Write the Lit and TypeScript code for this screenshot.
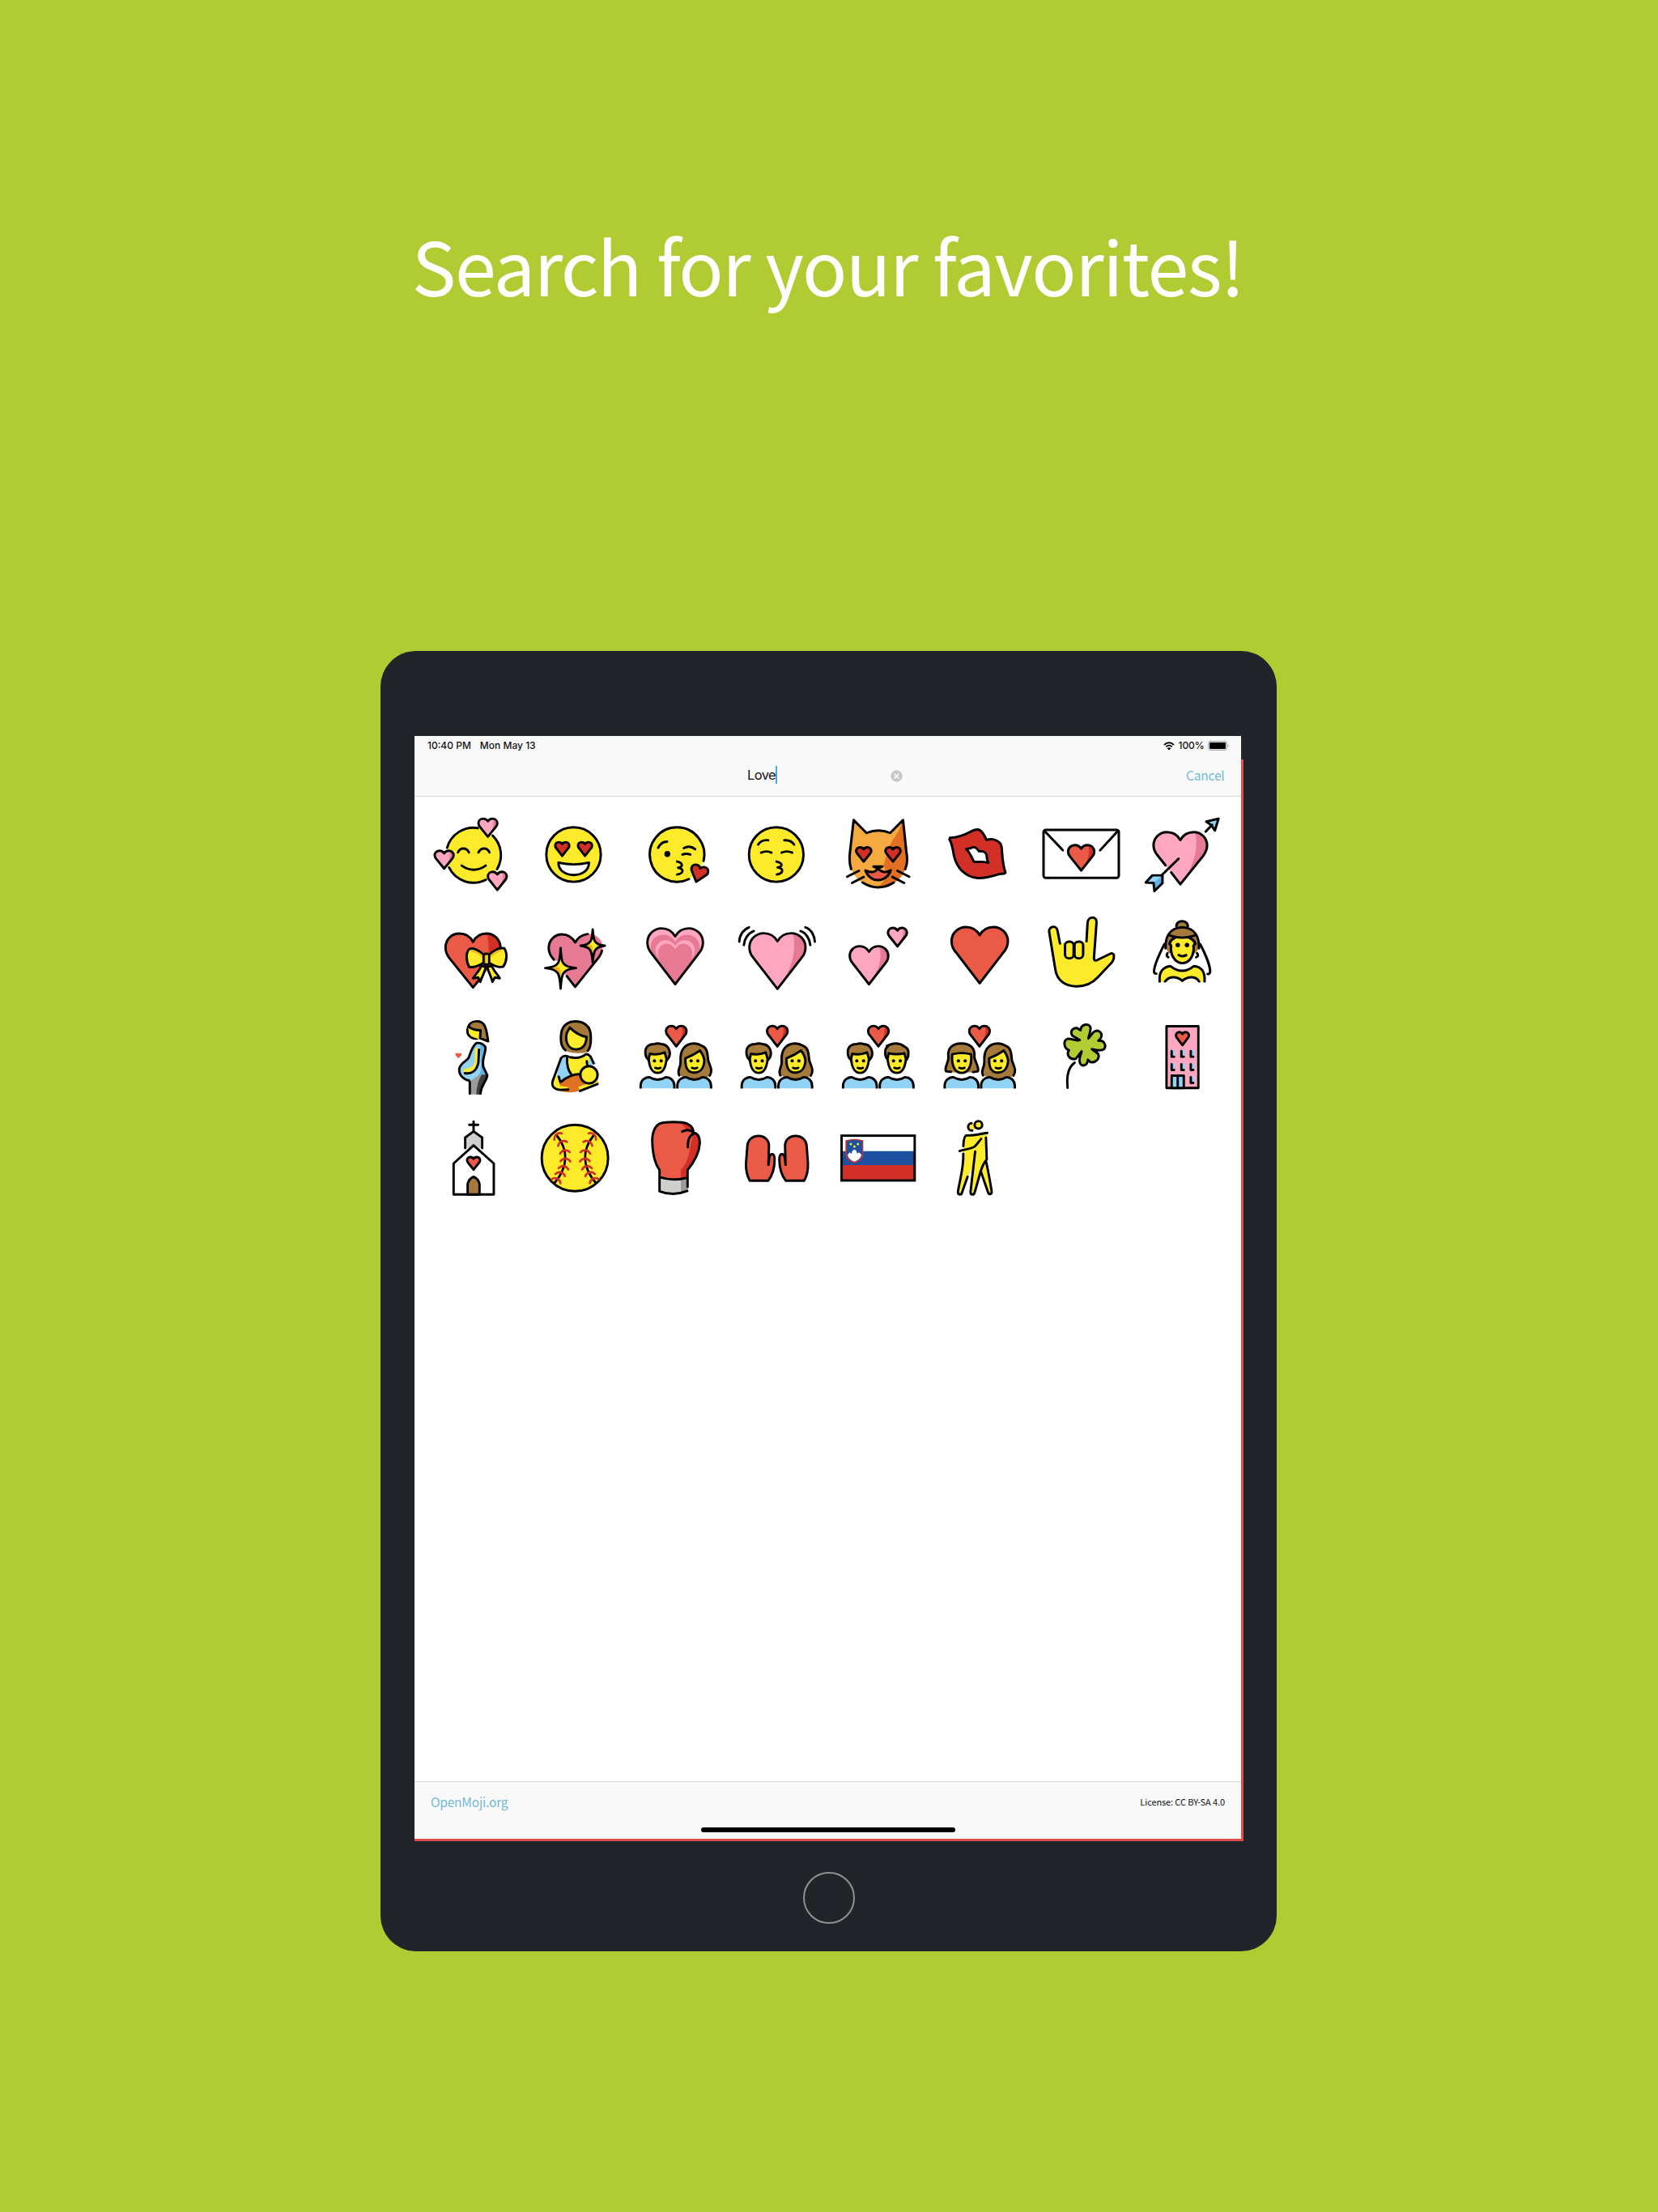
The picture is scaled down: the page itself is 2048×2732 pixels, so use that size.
import { LitElement, html, svg, css, type TemplateResult } from "lit";
import { customElement } from "lit/decorators.js";

type Art = TemplateResult;

const C = {
  yellow: "#fcea2b",
  gold: "#f1b31c",
  pink: "#ffa7c0",
  rose: "#e67a94",
  red: "#ea5a47",
  crimson: "#d22f27",
  sky: "#92d3f5",
  azure: "#61b2e4",
  brown: "#a57939",
  grey: "#d0cfce",
  midGrey: "#9b9b9a",
  coal: "#3f3f3f",
  orange: "#f4aa41",
  rust: "#e27022",
  green: "#b1cc33",
};

/* Filled and outlined path. */
const p = (d: string, fill = "none") => svg`<path class="ln" d=${d} fill=${fill}/>`;
/* Filled path without outline. */
const f = (d: string, fill: string) => svg`<path d=${d} fill=${fill}/>`;
const dot = (x: number, y: number, r: number, fill = "#000") => svg`<circle cx=${x} cy=${y} r=${r} fill=${fill}/>`;
const ring = (x: number, y: number, r: number, fill = "none") =>
  svg`<circle class="ln" cx=${x} cy=${y} r=${r} fill=${fill}/>`;

/* Heart outline from centre x, half width, top and tip. */
function scaled(d: string, cx: number, hw: number, top: number, tip: number): string {
  const sy = (tip - top) / 2.01;
  let i = 0;
  return d.replace(/-?\d*\.?\d+/g, (n) => {
    const v = i++ % 2 === 0 ? cx + Number(n) * hw : top + Number(n) * sy;
    return v.toFixed(1);
  });
}
const HEART =
  "M0 .29C-.1 .11 -.28 0 -.49 0C-.78 0 -1 .23 -1 .51C-1 .66 -.94 .8 -.85 .9L0 2.01L.85 .9C.94 .8 1 .66 1 .51C1 .23 .78 0 .49 0C.28 0 .1 .11 0 .29Z";
const HEART_SIDE = "M.55 0C.68 .6 .55 1.3 0 2.01L.85 .9C.94 .8 1 .66 1 .51C1 .23 .8 0 .55 0Z";
const heart = (cx: number, hw: number, top: number, tip: number, fill: string, side = "") => svg`
  ${f(scaled(HEART, cx, hw, top, tip), fill)}
  ${side ? f(scaled(HEART_SIDE, cx, hw, top, tip), side) : ""}
  ${p(scaled(HEART, cx, hw, top, tip))}`;
const flatHeart = (cx: number, hw: number, top: number, tip: number, fill: string) =>
  f(scaled(HEART, cx, hw, top, tip), fill);

/* People used in the couples. Positions are relative to the face centre. */
const shoulders = p("M-63 74V62C-62 40 -43 31 -30 32Q0 50 30 32C46 31 62 44 62 64V74", C.sky);
const shouldersBox = svg`${shoulders}<rect x="-70" y="74" width="140" height="8" fill="#fff"/>`;
const features = svg`${dot(-12, -29, 6)}${dot(13, -29, 6)}<path class="ln thin" d="M-9 -3Q1 2 11 -3"/>`;
const man = (x: number) => svg`<g transform="translate(${x} 240)">
  ${f("M-43 -44C-49 -70 -42 -90 -12 -91Q0 -95 13 -91C42 -90 49 -60 42 -42L33 -32L30 -58Q0 -46 -32 -58L-33 -34Z", C.brown)}
  ${f("M-32 -56Q0 -46 30 -58C36 -22 24 16 0 16C-26 14 -36 -20 -32 -56Z", C.yellow)}
  ${p("M-34 -32L-42 -42C-51 -68 -44 -91 -12 -91Q0 -95 13 -91C42 -90 50 -60 42 -42L35 -32")}
  ${p("M-33 -36L-29 -55Q0 -49 26 -60L33 -36C30 -6 20 16 0 16C-20 16 -31 -6 -33 -36")}
  ${features}${shouldersBox}</g>`;
const manParted = (x: number) => svg`<g transform="translate(${x} 240)">
  ${f("M-40 -42C-46 -60 -42 -78 -36 -81L-38 -86Q-16 -94 -2 -93C20 -93 36 -82 42 -70C48 -55 42 -40 37 -32L30 -56Q0 -50 -32 -56L-34 -33Z", C.brown)}
  ${f("M-32 -56Q0 -48 31 -56C36 -22 24 16 0 16C-26 14 -36 -20 -32 -56Z", C.yellow)}
  ${p("M-34 -33L-40 -42C-46 -60 -42 -78 -34 -80L-37 -84Q-14 -94 -2 -93C14 -92 22 -87 30 -81C46 -75 47 -50 37 -33")}
  ${p("M-34 -36L-30 -57Q0 -50 28 -57L34 -36C31 -6 20 16 0 16C-20 16 -31 -6 -34 -36")}
  ${features}${shouldersBox}</g>`;
const woman = (x: number) => svg`<g transform="translate(${x} 240)">
  ${f("M-57 24C-66 5 -50 -5 -52 -25C-54 -66 -38 -93 0 -93C17 -93 23 -87 33 -83C52 -72 50 -45 54 -28C62 -5 68 10 56 26Q44 36 36 32Q0 46 -36 32Z", C.brown)}
  ${f("M-33 -37Q-3 -50 21 -68C29 -55 37 -45 37 -28C35 0 20 15 0 15C-22 15 -35 0 -33 -37Z", C.yellow)}
  ${p("M-56 25C-66 5 -50 -2 -51 -25C-54 -66 -38 -93 0 -93C14 -93 22 -88 31 -83C52 -74 48 -45 52 -28C62 -2 68 10 57 26")}
  ${p("M-33 -38Q-3 -50 21 -67C29 -55 37 -45 37 -28C35 0 20 15 0 15C-22 15 -35 0 -33 -38Z")}
  ${features}${shouldersBox}</g>`;
const womanBob = (x: number) => svg`<g transform="translate(${x} 240)">
  ${f("M-36 14L-58 10C-68 -5 -48 -20 -50 -42C-54 -76 -34 -93 -2 -93C34 -93 51 -74 47 -42C50 -24 66 -5 60 10L38 14Z", C.brown)}
  ${f("M-35 -52Q0 -62 35 -52C39 -10 24 16 0 16C-24 16 -39 -10 -35 -52Z", C.yellow)}
  ${p("M-40 12L-58 10C-66 -5 -48 -20 -49 -42C-54 -76 -34 -93 -2 -93C34 -93 51 -74 47 -42C50 -24 66 -5 60 10L42 13")}
  ${p("M-35 -53Q0 -62 35 -53C39 -10 24 16 0 16C-24 16 -39 -10 -35 -53Z")}
  ${features}${shouldersBox}</g>`;

const couple = (x: number, a: Art, b: Art) => svg`${heart(x, 38, 82, 158, C.red, C.crimson)}${a}${b}`;

const sparkle = (x: number, y: number, rx: number, up: number, down: number) => {
  const d = `M${x} ${y - up}C${x + 2} ${y - 20} ${x + 5} ${y - 4} ${x + rx} ${y}C${x + 7} ${y + 4} ${x + 3} ${y + 20} ${x} ${y + down}C${x - 3} ${y + 20} ${x - 7} ${y + 4} ${x - rx} ${y}C${x - 5} ${y - 4} ${x - 2} ${y - 20} ${x} ${y - up}Z`;
  const shade = `M${x - rx} ${y}L${x - 7} ${y - 3}Q${x} ${y + 4} ${x + 1} ${y + 20}L${x} ${y + down}C${x - 3} ${y + 20} ${x - 7} ${y + 4} ${x - rx} ${y}Z`;
  return svg`${f(`M${x - 11} ${y - 28}L${x} ${y - 34}V${y}H${x - 8}Z`, C.yellow)}${f(d, C.yellow)}${f(shade, C.gold)}${p(d)}`;
};

const stitches: Array<[number, number, number]> = [
  [533, 112, -34], [551, 138, -18], [562, 171, -2], [565, 202, 8], [558, 230, 14], [547, 253, 20], [533, 276, 32],
];
const seam = svg`
  ${p("M532 112C576 166 576 228 524 290")}
  ${stitches.map(([x, y, a]) => svg`<path class="ln stitch" transform="translate(${x} ${y}) rotate(${a})" d="M-17 9Q-8 -4 0 -3Q12 -4 19 5"/>`)}`;

const mitten = svg`
  ${f("M1249 281C1238 265 1234 240 1235 215L1240 150C1245 103 1318 103 1319 150V190Q1340 165 1341 200C1341 235 1332 262 1318 281Z", C.red)}
  ${p("M1318 222L1321 195C1325 176 1341 178 1341 202C1341 235 1332 262 1317 281H1249C1238 262 1234 240 1235 215L1240 150C1245 103 1318 103 1320 150L1318 222")}`;

const hotelWindow = (x: number, y: number) => svg`
  <rect x=${x} y=${y - 2} width="13" height="26" fill=${C.sky}/>${p(`M${x} ${y + 2}V${y + 23}H${x + 9}`)}`;

/* Each drawing lives on one sheet: origin x, origin y, horizontal units per px. Vertical is 3 per px. */
type Sheet = [number, number, number];
const A: Sheet = [500, 990, 3];
const B: Sheet = [1010, 990, 2.9037];
const D: Sheet = [510, 1240, 3];
const E: Sheet = [1020, 1240, 3];
const F: Sheet = [510, 1365, 3];
const G: Sheet = [1020, 1365, 3];

interface Emoji { name: string; sheet: Sheet; art: Art; }

const EMOJIS: Emoji[] = [
  { name: "smiling face with hearts", sheet: A, art: svg`
    ${dot(255, 198, 101, C.yellow)}
    ${p("M270 98A101 101 0 0 0 156 171M163 244A101 101 0 0 0 300 289M325 126A101 101 0 0 1 341 250")}
    ${heart(307, 35, 63, 130, C.pink, C.rose)}${heart(145, 35, 182, 248, C.pink, C.rose)}${heart(342, 35, 260, 327, C.pink, C.rose)}
    ${p("M196 188C204 169 228 169 237 188M272 188C281 169 305 169 313 188M210 237Q254 268 299 237")}` },
  { name: "smiling face with heart-eyes", sheet: A, art: svg`
    ${ring(625, 196, 101, C.yellow)}
    ${heart(583, 26, 150, 201, C.crimson)}${heart(667.5, 26, 150, 201, C.crimson)}
    ${p("M569 226Q626 239 682 226C682 287 569 287 569 226Z", "#fff")}` },
  { name: "face blowing a kiss", sheet: A, art: svg`
    ${dot(1008, 196, 101, C.yellow)}
    ${p("M1107 220A101 101 0 1 0 1053 287")}
    ${p("M939 171Q950 148 972 148M1034 172Q1056 160 1076 176M1029 196Q1043 190 1058 196M1009 222C1032 227 1032 241 1013 245C1036 248 1034 267 1009 270")}
    ${dot(973, 194, 11)}
    <g transform="rotate(17 1080 297)">${heart(1080, 32, 236, 297, C.crimson)}</g>` },
  { name: "kissing face with closed eyes", sheet: A, art: svg`
    ${ring(1377, 196, 101, C.yellow)}
    ${p("M1310 159Q1322 140 1347 143M1407 143Q1432 141 1443 159M1321 189Q1341 180 1359 189M1397 189Q1417 180 1436 189M1378 222C1402 228 1402 240 1382 244C1406 248 1404 266 1379 270")}` },
  { name: "smiling cat with heart-eyes", sheet: B, art: svg`
    ${f("M130 68L176 116Q219 98 261 116L307 68L319 185C330 260 290 316 218 316C146 316 108 260 117 185Z", C.orange)}
    ${f("M307 68L319 185C330 260 290 316 218 316C244 292 252 272 250 262L236 238C250 200 254 160 278 130C290 112 300 92 307 68Z", C.rust)}
    ${p("M121 250C112 225 115 205 117 185L130 68L176 116Q219 98 261 116L307 68L319 185C322 205 325 225 315 250M162 300Q218 336 274 300")}
    ${heart(166, 27, 169, 222, C.crimson)}${heart(271, 27, 169, 222, C.crimson)}
    ${p("M172 255Q202 270 217 248Q238 270 263 254C248 303 188 303 172 255Z", C.red)}
    ${p("M201 240H233L217 248Z", "#000")}
    ${p("M107 278L149 256M124 301L166 279M329 278L287 256M311 301L269 279")}` },
  { name: "kiss mark", sheet: B, art: svg`
    ${p("M476 134Q512 132 548 112C582 92 592 108 607 142C632 134 658 146 661 168C664 200 664 235 675 262C673 270 663 266 655 268C630 276 600 286 575 283C530 280 500 245 490 200C486 170 480 150 474 139Z", C.crimson)}
    ${p("M534 176Q548 174 558 169C568 167 575 176 580 184C592 182 604 186 607 197Q608 215 613 227C598 219 580 225 562 223C554 208 548 188 534 176Z", "#fff")}` },
  { name: "love letter", sheet: B, art: svg`
    <rect class="ln" x="809" y="104.500" width="270" height="178" rx="8" fill="#fff"/>
    ${p("M813 109L878 180M1075 109L1012 180")}${heart(944, 47, 161, 255, C.red, C.crimson)}` },
  { name: "heart with arrow", sheet: B, art: svg`
    ${flatHeart(1300, 96, 113, 306, C.pink)}${f(scaled(HEART_SIDE, 1300, 96, 113, 306), C.rose)}
    ${p("M1247 236L1219 200C1208 187 1204 175 1204 162C1204 135 1225 113 1252 113C1273 113 1290 124 1300 142C1310 124 1327 113 1348 113C1375 113 1396 135 1396 162C1396 178 1390 190 1382 201L1300 306L1267 262")}
    ${p("M1294 211L1233 273")}
    ${f("M1176 300L1200 273L1236 273L1236 302L1207 331L1204 301Z", C.sky)}${f("M1236 273L1204 301L1207 331L1236 302Z", C.azure)}
    ${p("M1176 300L1200 273L1236 273L1236 302L1207 331L1204 301Z")}
    ${p("M1437 63L1393 74L1412 88L1424 107Z", C.sky)}${p("M1391 111L1414 86")}` },

  { name: "heart with ribbon", sheet: A, art: svg`
    ${flatHeart(252, 102, 489, 689, C.red)}
    ${f("M304 489C314 540 312 590 296 622L252 689L340 580C352 566 354 552 354 540C354 510 332 489 304 489Z", C.crimson)}
    ${p("M354 545C354 512 332 489 302 489C280 489 262 500 252 520C242 500 224 489 201 489C172 489 150 512 150 541C150 558 156 570 165 581L252 689L282 652")}
    ${p("M292 568C272 550 250 540 238 547C225 560 225 590 238 613C252 616 274 608 292 597Z", C.yellow)}
    ${p("M311 568C330 550 352 540 368 544C380 562 378 592 364 612C350 616 328 608 311 597Z", C.yellow)}
    <path d="M246 554Q268 556 287 574M356 551Q338 556 318 574" fill="none" stroke=${C.gold} stroke-width="6"/>
    ${p("M282 609C276 630 260 640 252 655L271 652L279 668C286 644 298 630 299 612Z", C.yellow)}
    ${p("M305 612C308 632 320 648 324 668L333 652L351 655C345 640 328 630 322 609Z", C.yellow)}
    <rect class="ln" x="291" y="564" width="20" height="40" rx="8" fill=${C.gold}/>
    ${f("M302 569H307V599H302Z", C.yellow)}` },
  { name: "sparkling heart", sheet: A, art: svg`
    ${flatHeart(631, 102, 490, 689, C.rose)}
    ${f("M552 590L590 590V640H560Z", "#fff")}
    ${p("M552 586C538 570 533 558 533 543C533 515 554 492 582 492C604 492 620 504 631 522C640 506 655 494 677 491M730 553C728 565 722 573 715 582L631 687L600 647")}
    ${sparkle(577, 617, 57, 74, 76)}${sparkle(696, 534, 45, 60, 62)}` },
  { name: "growing heart", sheet: A, art: svg`
    ${flatHeart(1002, 103, 470, 677, C.pink)}${flatHeart(1002, 91, 494, 677, C.rose)}
    ${flatHeart(1002, 73, 514, 662, C.pink)}${flatHeart(1002, 64, 527, 677, C.rose)}
    ${p(scaled(HEART, 1002, 103, 470, 677))}` },
  { name: "beating heart", sheet: A, art: svg`
    ${heart(1381.5, 104, 488, 694, C.pink, C.rose)}
    ${p("M1240 519C1241 495 1255 474 1276 466M1257 532C1258 510 1272 488 1294 480M1520 519C1519 497 1506 472 1485 466M1503 532C1502 511 1488 487 1467 480")}` },
  { name: "two hearts", sheet: B, art: svg`
    ${heart(185, 69, 536, 677, C.pink, C.rose)}${heart(287, 34, 468, 537, C.pink, C.rose)}` },
  { name: "red heart", sheet: B, art: heart(582.5, 101, 465, 673, C.red) },
  { name: "love-you gesture", sheet: B, art: svg`
    ${p("M868 526L859 478C856 458 828 460 829 482L851 620C856 665 890 686 930 685C965 684 985 672 1003 652L1054 596C1062 586 1062 576 1061 568C1059 562 1054 562 1048 564L1000 588C992 591 989 587 990 578L999 448C1001 424 969 424 967 448L963 518", C.yellow)}
    <rect class="ln" x="886" y="519" width="31" height="62" rx="14" fill=${C.yellow}/>
    <rect class="ln" x="920" y="519" width="31" height="62" rx="14" fill=${C.yellow}/>` },
  { name: "bride with veil", sheet: B, art: svg`
    ${p("M1286 463C1284 437 1328 437 1327 463", C.brown)}
    ${f("M1248 545C1244 515 1250 468 1307 466C1364 468 1370 515 1366 545L1354 562L1260 562Z", C.brown)}
    ${f("M1266 545C1262 520 1280 505 1307 503C1333 505 1352 520 1348 545C1348 580 1330 598 1307 599C1284 598 1266 575 1266 545Z", C.yellow)}
    ${p("M1247 544C1246 510 1256 468 1307 466C1358 468 1368 510 1367 544M1264 497Q1307 512 1350 497M1279 506Q1262 514 1261 528Q1270 532 1266 545C1268 580 1288 599 1307 599C1328 599 1346 580 1348 545Q1344 532 1354 528Q1352 514 1334 506")}
    ${p("M1243 528C1225 565 1205 610 1206 630Q1206 638 1214 638M1371 528C1390 565 1407 610 1407 630Q1406 640 1398 639M1254 562Q1248 572 1257 577M1360 562Q1368 572 1357 577")}
    ${dot(1291, 532, 8)}${dot(1324, 532, 8)}${p("M1294 569Q1307 577 1321 569")}
    ${p("M1226 668C1222 630 1240 612 1265 610Q1307 644 1348 610C1375 612 1390 630 1387 668", C.yellow)}
    ${p("M1245 668C1257 648 1285 645 1307 664C1330 645 1358 648 1368 668", "#fff")}
    ${f("M1215 671H1400V682H1215Z", "#fff")}` },

  { name: "pregnant woman", sheet: D, art: svg`
    ${p("M204 86C196 108 205 130 238 129", C.yellow)}${f("M204 86L248 96L246 134L238 129Q204 122 204 86Z", C.yellow)}
    ${p("M205 84C210 68 228 64 242 65C268 68 272 95 278 139L248 127L250 98Q222 98 205 84Z", C.brown)}
    ${f("M232 146C245 140 262 148 269 160L262 218L273 262L243 290L210 286C185 278 168 262 171 240C176 222 192 214 205 200C212 180 220 158 232 146Z", C.sky)}
    ${f("M248 150L269 160L262 218L273 262L245 262Q256 240 252 214Z", C.azure)}
    ${f("M208 290L245 262L272 262C268 290 252 310 250 336L208 336Z", C.midGrey)}
    ${f("M254 262L274 262C268 290 252 310 250 336L234 336Q236 290 254 262Z", C.coal)}
    <path d="M237 170L234 222Q226 244 192 248" fill="none" stroke=${C.yellow} stroke-width="14" stroke-linecap="round"/>
    ${p("M244 170L242 216C236 250 215 261 192 257")}
    ${p("M208 285C185 280 168 262 171 240C176 218 200 212 206 200C212 182 220 155 234 146C248 142 262 150 268 160C270 178 258 200 259 218L259 232L275 265C270 290 250 306 250 333M210 290V333")}
    ${flatHeart(168, 12, 182, 202, C.red)}` },
  { name: "breast-feeding", sheet: D, art: svg`
    ${f("M565 174C545 160 545 130 550 105C556 75 580 65 602 65C630 65 655 80 658 110C661 140 660 165 648 178Q600 190 565 174Z", C.brown)}
    ${p("M581 88C600 107 620 118 643 123C642 150 630 168 604 169C575 168 562 140 570 108Z", C.yellow)}
    ${p("M565 172C545 158 546 130 550 105C556 75 580 65 602 65C630 65 655 80 658 110C661 140 660 160 648 174")}
    ${f("M546 208L571 192L590 262L540 290L522 310Z", C.sky)}
    ${f("M571 198Q602 205 640 188L672 222L650 235L615 265L585 262Z", C.yellow)}${f("M654 195L680 222L650 232Z", C.sky)}
    ${f("M530 265L550 290L548 300L576 306L574 319L545 320Q512 315 518 285Z", C.yellow)}
    ${f("M542 295C575 262 600 258 618 262Q632 285 676 292L618 322Q580 335 545 322L576 316L574 308L546 304Z", C.rust)}
    ${f("M684 240L686 292L618 320L612 308L655 292Z", C.yellow)}
    ${p("M575 195C560 190 550 195 546 208L518 285C512 305 522 316 545 319L575 318M571 200C570 225 573 245 586 260M582 198C603 202 625 200 640 187C652 184 662 200 669 220M644 213L646 230M550 288C570 270 600 260 614 261M540 270L546 290M684 297L619 323")}
    ${ring(652, 263, 32, C.yellow)}` },
  { name: "couple with heart", sheet: D, art: couple(976, man(907), woman(1043)) },
  { name: "couple with heart: woman, man", sheet: D, art: couple(1351, man(1282), woman(1418)) },
  { name: "couple with heart: man, man", sheet: E, art: couple(196, man(128), manParted(264)) },
  { name: "couple with heart: woman, woman", sheet: E, art: couple(571, womanBob(505), woman(640)) },
  { name: "four leaf clover", sheet: E, art: svg`
    ${p("M940 134L913 118C903 105 912 88 930 90L943 98C944 74 976 70 980 88C981 105 973 118 972 128L990 106C1005 92 1028 105 1018 127L1009 137C1030 132 1040 155 1030 168C1015 178 995 170 985 168L1008 185C1017 205 995 220 980 216L970 207C970 228 950 234 942 222C933 205 945 190 947 176L925 204C905 208 888 190 900 172C880 165 878 135 895 130C915 128 925 140 940 134Z", C.green)}
    ${p("M921 218C898 235 890 265 895 311")}` },
  { name: "love hotel", sheet: E, art: svg`
    <rect class="ln" x="1262" y="83" width="118" height="229" fill=${C.pink}/>
    ${heart(1321, 24, 105, 153, C.red)}
    ${[1281, 1317, 1352].map((x) => svg`${hotelWindow(x, 173)}${hotelWindow(x, 222)}`)}
    ${hotelWindow(1352, 270)}
    <rect class="ln" x="1281" y="266" width="45" height="46" fill=${C.sky}/>${p("M1303.500 266V312")}` },

  { name: "church", sheet: F, art: svg`
    ${p("M224 62V98M208 74H241")}${p("M193 160V121L224 98L256 121V160", C.grey)}
    ${f("M198 176L224 152L250 176Z", "#fff")}
    ${p("M150 332V217L224 150L299 217V332Z", "#fff")}
    ${heart(224, 24, 193, 240, C.red)}
    ${p("M202 332V292Q208 272 224 266Q240 272 246 292V332Z", C.brown)}` },
  { name: "softball", sheet: F, art: svg`
    ${ring(600, 197, 123, C.yellow)}${seam}<g transform="translate(1202 0) scale(-1 1)">${seam}</g>` },
  { name: "boxing glove", sheet: F, art: svg`
    ${f("M914 241C895 215 887 170 887 125C890 85 905 66 935 65Q965 62 1000 65C1020 68 1040 80 1040 103C1055 105 1064 115 1063 145C1060 185 1040 215 1018 241L1016 272Q965 282 914 268Z", C.red)}
    ${f("M1063 145C1060 185 1040 215 1018 241L1016 272L993 276V240C1030 205 1024 150 1040 106Q1064 112 1063 145Z", C.crimson)}
    ${f("M985 66Q1040 70 1040 103Q1030 92 1012 92Q1004 74 985 66Z", C.crimson)}
    ${f("M914 270Q965 282 1018 268V318Q965 342 914 320Z", C.grey)}${f("M993 274L1018 268V318L993 328Z", C.midGrey)}
    ${p("M914 241C895 215 887 170 887 125C890 85 905 66 935 65Q965 62 1000 65C1020 68 1040 80 1040 103C1055 105 1064 115 1063 145C1060 185 1040 215 1018 241V304M914 241V320Q965 340 1017 319M914 268Q965 284 1016 270M998 99Q1022 86 1040 103M1040 107C1020 115 1018 135 1019 157")}` },
  { name: "palms up together", sheet: F, art: svg`${mitten}<g transform="translate(2699.500 0) scale(-1 1)">${mitten}</g>` },
  { name: "flag: Slovenia", sheet: G, art: svg`
    ${f("M60 114H330V280H60Z", "#fff")}${f("M60 171H330V223H60Z", "#1e50a0")}${f("M60 223H330V280H60Z", C.crimson)}
    <path d="M76 133Q107 123 138 133V180Q136 205 107 214Q78 205 76 180Z" fill="#1e50a0" stroke=${C.crimson} stroke-width="4"/>
    ${f("M82 184L90 176L96 181L100 170L107 165L114 170L118 181L124 176L133 184Q130 202 107 210Q84 202 82 184Z", "#fff")}
    ${dot(94, 145, 4.5, C.yellow)}${dot(120, 145, 4.5, C.yellow)}${dot(107, 154, 4.5, C.yellow)}
    <rect class="ln sharp" x="59.500" y="114" width="271" height="166" fill="none"/>` },
  { name: "people hugging", sheet: G, art: svg`
    ${dot(543, 81, 14, C.yellow)}
    ${f("M511 160C512 130 514 115 522 113Q560 115 598 106L598 205L616 322Q608 335 603 325L577 247L553 325Q540 338 538 320L545 230L527 268L506 325Q491 335 491 322C500 270 513 230 511 180Z", C.yellow)}
    ${f("M577 252L603 325L620 345H545L553 325Z", "#fff")}${f("M577 247L597 206L616 322L608 330L602 322Z", C.yellow)}
    ${p("M541 68A13.500 13.500 0 0 0 544 95")}${ring(567, 74, 14, C.yellow)}
    ${p("M511 153C512 130 514 115 522 113C545 115 570 108 600 104M497 171C520 165 545 160 552 155C562 148 568 136 577 126M511 181C513 230 500 270 491 322C491 335 505 334 506 325L527 266M555 173L538 320C536 335 550 335 553 325L576 244Q584 218 598 202L595 121M577 249L603 325C608 335 618 330 616 320C610 280 602 240 596 212")}` },
];

const CELL = 125.15;

@customElement("app-root")
export class AppRoot extends LitElement {
  static styles = css`
    :host {
      display: block;
      width: 2048px;
      height: 2732px;
      background: #b1cc33;
      font-family: "Noto Sans CJK SC", "Noto Sans", sans-serif;
      color: #111;
    }
    .poster { display: flex; flex-direction: column; align-items: center; height: 2732px; }
    .title {
      margin: 0;
      height: 804px;
      padding: 256px 3px 0 0;
      box-sizing: border-box;
      color: #fff;
      font-size: 91.500px;
      font-weight: 400;
      letter-spacing: -1.480px;
      line-height: 140px;
      white-space: nowrap;
    }
    .tablet {
      display: flex;
      flex-direction: column;
      align-self: flex-start;
      align-items: flex-start;
      width: 1107px;
      height: 1606px;
      margin-left: 470px;
      padding: 105px 0 0 42px;
      box-sizing: border-box;
      border-radius: 44px;
      background: #212429;
    }
    .panel {
      width: 1024px;
      height: 1365px;
      padding: 0 3px 3px 0;
      box-sizing: border-box;
      background: linear-gradient(#212429 29px, #e04b4b 29px);
    }
    .screen { display: flex; flex-direction: column; height: 1362px; background: #fff; }
    .header { height: 75px; box-sizing: border-box; background: #f9f9f9; border-bottom: 1px solid #d6d6d6; }
    .status {
      display: flex;
      align-items: center;
      height: 24px;
      padding: 0 14.500px 0 16px;
      font: 500 12px/24px Inter, sans-serif;
    }
    .time { margin-right: 11px; }
    .wifi { margin-left: auto; margin-right: 4.500px; }
    .percent { letter-spacing: -0.1px; }
    .battery { margin-left: 4px; }
    .search { display: flex; align-items: center; height: 49px; padding: 0 20.500px 0 411px; }
    .query { margin-bottom: 2px; font: 400 16.500px/22px Inter, sans-serif; letter-spacing: -0.600px; }
    .caret { width: 2px; height: 22px; margin-bottom: 1px; background: #4ba9cf; }
    .clear { margin: 2px 0 0 140px; }
    .link { color: #70b9d6; font-size: 15.500px; line-height: 22px; letter-spacing: -0.2px; }
    .cancel { margin: -1px 0 1px auto; }
    .grid {
      flex: 1;
      display: grid;
      grid-template-columns: repeat(8, 125.15px);
      grid-auto-rows: 125.15px;
      align-content: start;
      padding: 8.900px 0 0 9.700px;
    }
    .emoji { display: block; width: 125.15px; height: 125.15px; overflow: visible; }
    .ln { stroke: #000; stroke-width: 8.75; stroke-linecap: round; stroke-linejoin: round; }
    .thin { stroke-width: 8; fill: none; }
    .stitch { stroke: #d22f27; fill: none; stroke-width: 8; }
    .sharp { stroke-linejoin: miter; }
    .footer {
      display: flex;
      flex-direction: column;
      align-items: center;
      height: 71px;
      box-sizing: border-box;
      background: #f9f9f9;
      border-top: 1px solid #d6d6d6;
    }
    .credits {
      align-self: stretch;
      display: flex;
      align-items: center;
      justify-content: space-between;
      height: 48px;
      padding: 0 20px;
    }
    .license { font-size: 11px; line-height: 16px; letter-spacing: -0.100px; }
    .indicator { width: 314px; height: 6px; margin-top: 8px; border-radius: 3px; background: #000; }
    .home {
      width: 64px;
      height: 64px;
      margin: 38px 0 0 480px;
      box-sizing: border-box;
      border: 2px solid #8f9193;
      border-radius: 50%;
    }
  `;

  private renderEmoji(e: Emoji, i: number) {
    const [ox, oy, k] = e.sheet;
    const x = (521.7 + CELL * (i % 8) - ox) * k;
    const y = (992.9 + CELL * Math.floor(i / 8) - oy) * 3;
    return html`<svg class="emoji" role="img" aria-label=${e.name} preserveAspectRatio="none"
      viewBox="${x} ${y} ${CELL * k} ${CELL * 3}">${e.art}</svg>`;
  }

  render() {
    return html`
      <main class="poster">
        <h1 class="title">Search for your favorites!</h1>
        <section class="tablet">
          <div class="panel">
            <div class="screen">
              <header class="header">
                <div class="status">
                  <span class="time">10:40 PM</span><span class="date">Mon May 13</span>
                  <svg class="wifi" width="14" height="11" viewBox="0 0 14 11">
                    <path d="M1 4Q7 -1.400 13 4M3.300 6.300Q7 3 10.700 6.300" fill="none" stroke="#000" stroke-width="1.800"/>
                    <path d="M4.700 8.200Q7 6.400 9.300 8.200L7 10.600Z"/>
                  </svg>
                  <span class="percent">100%</span>
                  <svg class="battery" width="27" height="12" viewBox="0 0 27 12">
                    <rect x=".6" y=".6" width="22.800" height="10.800" rx="2.800" fill="none" stroke="#aaa" stroke-width="1.200"/>
                    <rect x="2" y="2" width="20" height="8" rx="1.300"/>
                    <path d="M24.600 4Q26 4.500 26 6T24.600 8Z" fill="#aaa"/>
                  </svg>
                </div>
                <div class="search">
                  <span class="query">Love</span><span class="caret"></span>
                  <svg class="clear" width="15" height="15" viewBox="0 0 15 15">
                    <circle cx="7.500" cy="7.500" r="7.200" fill="#c7c7c7"/>
                    <path d="M5 5L10 10M10 5L5 10" stroke="#fff" stroke-width="1.500" stroke-linecap="round"/>
                  </svg>
                  <span class="link cancel">Cancel</span>
                </div>
              </header>
              <div class="grid">${EMOJIS.map((e, i) => this.renderEmoji(e, i))}</div>
              <footer class="footer">
                <div class="credits">
                  <span class="link">OpenMoji.org</span><span class="license">License: CC BY-SA 4.0</span>
                </div>
                <div class="indicator"></div>
              </footer>
            </div>
          </div>
          <div class="home"></div>
        </section>
      </main>
    `;
  }
}
